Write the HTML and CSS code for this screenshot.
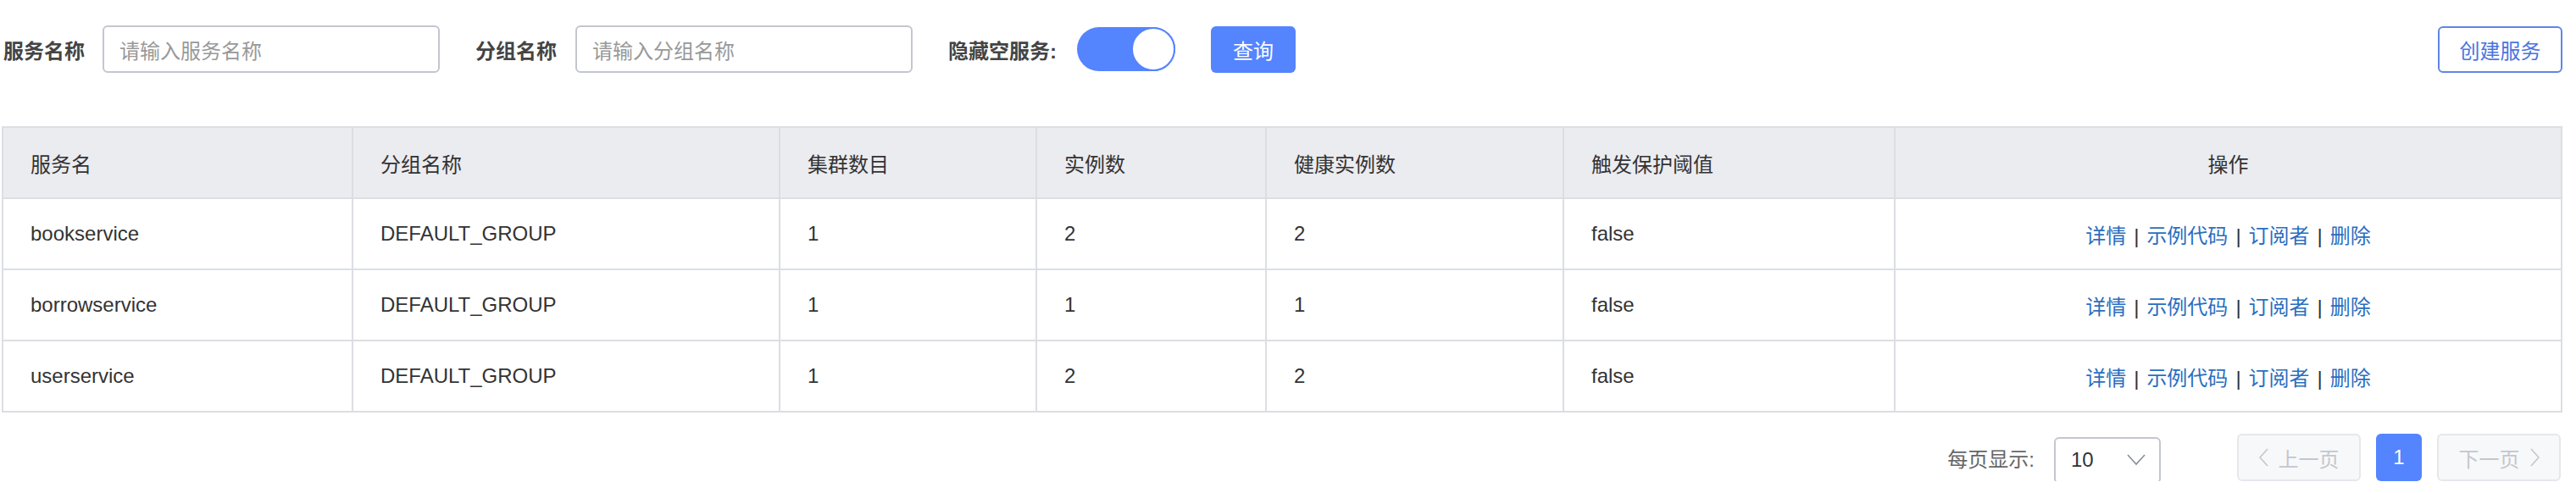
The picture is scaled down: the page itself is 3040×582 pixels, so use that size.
FILE: index.html
```html
<!DOCTYPE html>
<html lang="zh-CN">
<head>
<meta charset="utf-8">
<title>服务列表</title>
<link rel="stylesheet" href="styles.css">
</head>
<body>
<div class="page">
  <div class="toolbar">
    <span class="label label-first">服务名称</span>
    <div class="input"><span class="placeholder">请输入服务名称</span></div>
    <span class="label label-gap">分组名称</span>
    <div class="input"><span class="placeholder">请输入分组名称</span></div>
    <span class="label label-gap label-switch">隐藏空服务:</span>
    <div class="switch"><span class="knob"></span></div>
    <button class="btn btn-primary">查询</button>
    <div class="spacer"></div>
    <button class="btn btn-outline">创建服务</button>
  </div>

  <table class="grid">
    <colgroup>
      <col class="c1"><col class="c2"><col class="c3"><col class="c4"><col class="c5"><col class="c6"><col class="c7">
    </colgroup>
    <thead>
      <tr>
        <th>服务名</th><th>分组名称</th><th>集群数目</th><th>实例数</th><th>健康实例数</th><th>触发保护阈值</th><th class="center">操作</th>
      </tr>
    </thead>
    <tbody>
      <tr>
        <td>bookservice</td><td>DEFAULT_GROUP</td><td>1</td><td>2</td><td>2</td><td>false</td>
        <td class="center"><a>详情</a><span class="sep">|</span><a>示例代码</a><span class="sep">|</span><a>订阅者</a><span class="sep">|</span><a>删除</a></td>
      </tr>
      <tr>
        <td>borrowservice</td><td>DEFAULT_GROUP</td><td>1</td><td>1</td><td>1</td><td>false</td>
        <td class="center"><a>详情</a><span class="sep">|</span><a>示例代码</a><span class="sep">|</span><a>订阅者</a><span class="sep">|</span><a>删除</a></td>
      </tr>
      <tr>
        <td>userservice</td><td>DEFAULT_GROUP</td><td>1</td><td>2</td><td>2</td><td>false</td>
        <td class="center"><a>详情</a><span class="sep">|</span><a>示例代码</a><span class="sep">|</span><a>订阅者</a><span class="sep">|</span><a>删除</a></td>
      </tr>
    </tbody>
  </table>

  <div class="pager">
    <span class="pager-label">每页显示:</span>
    <div class="select">
      <span>10</span>
      <svg class="chev-down" width="22" height="14" viewBox="0 0 22 14"><polyline points="1,1 11,12 21,1" fill="none" stroke="#8a8d99" stroke-width="1.6"/></svg>
    </div>
    <div class="page-btn disabled prev">
      <svg width="11" height="22" viewBox="0 0 11 22"><polyline points="10,1 1,11 10,21" fill="none" stroke="#c4c6cf" stroke-width="1.6"/></svg>
      <span>上一页</span>
    </div>
    <div class="page-btn current">1</div>
    <div class="page-btn disabled next">
      <span>下一页</span>
      <svg width="11" height="22" viewBox="0 0 11 22"><polyline points="1,1 10,11 1,21" fill="none" stroke="#c4c6cf" stroke-width="1.6"/></svg>
    </div>
  </div>
</div>
</body>
</html>
```

FILE: styles.css
```css
* { box-sizing: border-box; }
html, body {
  margin: 0;
  padding: 0;
  background: #fff;
}
body {
  font-family: "Liberation Sans", "Noto Sans CJK SC", sans-serif;
  font-size: 24px;
  color: #333;
}
.page {
  width: 3024px;
  padding-left: 2px;
}
.toolbar {
  display: flex;
  align-items: center;
  height: 56px;
  margin-top: 30px;
}
.label {
  font-weight: bold;
  color: #444;
  white-space: nowrap;
}
.label-first { margin-left: 2px; margin-right: 21px; }
.label-gap { margin-left: 42px; margin-right: 22px; }
.label-switch { margin-right: 24px; }
.input {
  width: 398px;
  height: 56px;
  border: 2px solid #c4c6cf;
  border-radius: 6px;
  display: flex;
  align-items: center;
  padding-left: 18px;
}
.placeholder { color: #999; }
.switch {
  width: 116px;
  height: 52px;
  border-radius: 26px;
  background: #5584ff;
  display: flex;
  justify-content: flex-end;
  align-items: center;
}
.knob {
  width: 52px;
  height: 52px;
  border-radius: 50%;
  background: #fff;
  border: 2px solid #5584ff;
}
.btn {
  font-family: inherit;
  font-size: 24px;
  height: 55px;
  border-radius: 6px;
  cursor: pointer;
  padding: 0;
}
.btn-primary {
  margin-left: 42px;
  width: 100px;
  background: #5584ff;
  color: #fff;
  border: none;
}
.spacer { flex: 1; }
.btn-outline {
  width: 147px;
  background: #fff;
  color: #4a74e0;
  border: 2px solid #5f86e6;
}
.grid {
  margin-top: 63px;
  width: 3020px;
  table-layout: fixed;
  border-collapse: collapse;
  border: 2px solid #dcdee3;
}
.c1 { width: 413px; }
.c2 { width: 504px; }
.c3 { width: 303px; }
.c4 { width: 271px; }
.c5 { width: 351px; }
.c6 { width: 391px; }
.c7 { width: 787px; }
.grid th, .grid td {
  height: 84px;
  padding: 0 32px;
  border: 2px solid #dcdee3;
  text-align: left;
  font-weight: normal;
  color: #333;
  white-space: nowrap;
}
.grid th { background: #ebecf0; }
.grid .center { text-align: center; }
.grid a { color: #2a6ebf; }
.sep { margin: 0 9px; color: #333; }
.pager {
  display: flex;
  justify-content: flex-end;
  align-items: center;
  margin-top: 25px;
  height: 56px;
  width: 3020px;
}
.pager-label { color: #666; margin-right: 23px; }
.select {
  width: 126px;
  height: 55px;
  margin-top: 6px;
  border: 2px solid #c4c6cf;
  border-radius: 6px;
  display: flex;
  align-items: center;
  justify-content: space-between;
  padding: 0 16px 0 18px;
  color: #333;
}
.page-btn {
  height: 56px;
  border-radius: 6px;
  display: flex;
  align-items: center;
  justify-content: center;
  gap: 12px;
}
.disabled {
  width: 146px;
  background: #f7f8fa;
  border: 2px solid #e6e7eb;
  color: #c4c6cf;
}
.prev { margin-left: 90px; }
.current {
  width: 54px;
  margin: 0 18px;
  background: #5584ff;
  color: #fff;
}
```
